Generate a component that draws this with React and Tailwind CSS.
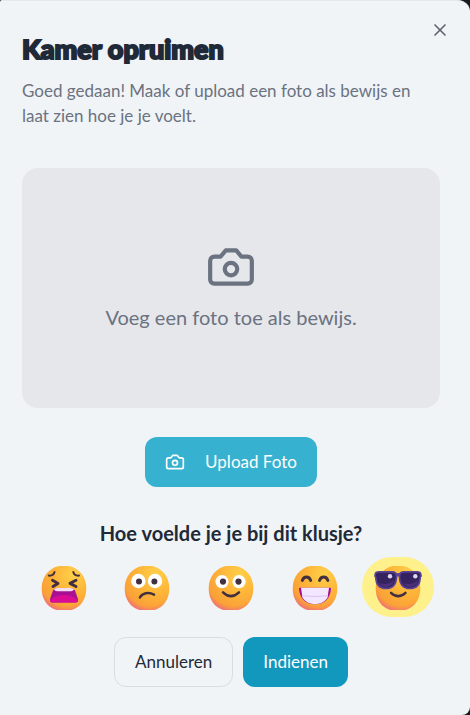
import { useId, useState } from 'react';
import { X } from 'lucide-react';

function CameraIcon({ className }) {
  return (
    <svg
      viewBox="0 0 24 24"
      className={className}
      fill="none"
      stroke="currentColor"
      strokeWidth="2"
      strokeLinecap="round"
      strokeLinejoin="round"
      aria-hidden="true"
    >
      <path d="M14.500 4h-5L7 7H4a2 2 0 0 0-2 2v9a2 2 0 0 0 2 2h16a2 2 0 0 0 2-2V9a2 2 0 0 0-2-2h-3l-2.500-3z" />
      <circle cx="12" cy="13" r="3" />
    </svg>
  );
}

const headShape =
  'M36 8.500C48.700 8.500 58.300 18 58.300 31.200C58.300 45 49.500 54 36 54C22.500 54 13.700 45 13.700 31.200C13.700 18 23.300 8.500 36 8.500Z';

function Face({ children }) {
  const id = useId();
  return (
    <svg viewBox="0 0 72 60" className="h-[60px] w-[72px]" aria-hidden="true">
      <defs>
        <radialGradient id={id + 'a'} cx="0.7" cy="0.2" r="0.95">
          <stop offset="0" stopColor="#ffd04a" />
          <stop offset="0.45" stopColor="#feb438" />
          <stop offset="0.8" stopColor="#fa9f38" />
          <stop offset="1" stopColor="#ec8048" />
        </radialGradient>
        <radialGradient id={id + 'b'} cx="0.56" cy="0.3" r="0.78">
          <stop offset="0.76" stopColor="#f0609a" stopOpacity="0" />
          <stop offset="1" stopColor="#ee5fa8" stopOpacity="0.9" />
        </radialGradient>
        <clipPath id={id + 'c'}>
          <rect x="12" y="9" width="48" height="44" />
        </clipPath>
      </defs>
      <g clipPath={`url(#${id}c)`}>
        <path d={headShape} fill={`url(#${id}a)`} />
        <path d={headShape} fill={`url(#${id}b)`} />
      </g>
      {children}
    </svg>
  );
}

function Angry() {
  return (
    <Face>
      <g fill="none" stroke="#43303f" strokeLinecap="round" strokeLinejoin="round">
        <path d="M20.800 18.600Q25.500 19 26.500 15M45.300 15Q46.300 19 51 18.600" strokeWidth="2" />
        <path d="M24.500 23.300L30 26.400L25 29.500M48 23.300L42 26.400L48 29.500" strokeWidth="2.900" />
      </g>
      <path d="M29 31H43Q45.500 31 47 33.500L49.800 41.500Q50.700 45.500 47.500 45.500H24.500Q21.300 45.500 22.200 41.500L25 33.500Q26.500 31 29 31Z" fill="#a80f93" />
      <path d="M24.500 45.500Q22 45.500 22 43Q28 38 36 38Q44 38 50 43Q50 45.500 47.500 45.500Z" fill="#d90c96" />
      <path d="M29 31H43Q45 31 46 32.500Q45 34.300 43 34.300H29Q27 34.300 26 32.500Q27 31 29 31Z" fill="#f0def5" />
    </Face>
  );
}

function Sad() {
  return (
    <Face>
      <circle cx="27.400" cy="24" r="7.200" fill="#fff" />
      <circle cx="44" cy="24" r="7.200" fill="#fff" />
      <circle cx="28" cy="24.600" r="3" fill="#43303f" />
      <circle cx="43.400" cy="24.600" r="3" fill="#43303f" />
      <path d="M28.900 40.500C31.500 35.800 37.500 34.800 43 37.600" fill="none" stroke="#43303f" strokeWidth="2.500" strokeLinecap="round" />
    </Face>
  );
}

function Happy() {
  return (
    <Face>
      <circle cx="27" cy="24.600" r="6.600" fill="#fff" />
      <circle cx="44" cy="24.600" r="6.600" fill="#fff" />
      <circle cx="28" cy="24.600" r="3.100" fill="#43303f" />
      <circle cx="43.500" cy="24.600" r="3.100" fill="#43303f" />
      <path d="M28 35.300Q35.900 43 44 35.300" fill="none" stroke="#43303f" strokeWidth="2.500" strokeLinecap="round" />
    </Face>
  );
}

function Grin() {
  return (
    <Face>
      <path d="M23.300 23.500Q24.500 20 27.500 20Q30.500 20 31.700 23.500M40.500 23.500Q41.700 20 44.700 20Q47.700 20 48.900 23.500" fill="none" stroke="#43303f" strokeWidth="2.900" strokeLinecap="round" />
      <path d="M20.800 30.700H51.200Q52.200 30.700 52 32C51 42 45.500 47.200 36 47.200C26.500 47.200 21 42 20 32Q19.800 30.700 20.800 30.700Z" fill="#a30b91" />
      <path d="M22 30.700H50L48.500 41Q43.500 47.200 36 47.200Q28.500 47.200 23.500 41Z" fill="#f3e6ff" />
      <path d="M22.800 38.800Q36 40.300 49.200 38.800" fill="none" stroke="#dcc4f2" strokeWidth="1" />
    </Face>
  );
}

function Cool() {
  return (
    <Face>
      <path d="M29 35.800Q36.200 42.500 43.500 35.800" fill="none" stroke="#43303f" strokeWidth="2.500" strokeLinecap="round" />
      <path d="M32 16.500Q36 15.500 40 16.500V20.500Q36 18.500 32 20.500Z" fill="#5f459a" />
      <path d="M13.300 17Q13.500 14.800 17 14.800H30Q34.500 14.800 34.500 19C34.500 27 31 31.500 24 31.500C17 31.500 14 27 13.800 20.500Q12.500 18.500 13.300 17Z" fill="#35235f" stroke="#5a4294" strokeWidth="1.700" />
      <path d="M58.700 17Q58.500 14.800 55 14.800H42Q37.500 14.800 37.500 19C37.500 27 41 31.500 48 31.500C55 31.500 58 27 58.200 20.500Q59.500 18.500 58.700 17Z" fill="#35235f" stroke="#5a4294" strokeWidth="1.700" />
      <path d="M17 26Q20 31 25 30Q31 29 32 23Q26 29 17 26ZM41 26Q44 31 49 30Q55 29 56 23Q50 29 41 26Z" fill="#4b2f78" />
      <circle cx="28" cy="19.300" r="2.200" fill="#dcd5ef" />
      <circle cx="53.300" cy="19.300" r="2.200" fill="#dcd5ef" />
    </Face>
  );
}

const moods = [
  { name: 'Vreselijk', Icon: Angry },
  { name: 'Niet leuk', Icon: Sad },
  { name: 'Prima', Icon: Happy },
  { name: 'Leuk', Icon: Grin },
  { name: 'Geweldig', Icon: Cool },
];

export default function App() {
  const [mood, setMood] = useState(4);
  return (
    <div className="min-h-screen bg-[#16191d] font-['Lato','Noto_Sans',sans-serif]">
      <main
        role="dialog"
        aria-labelledby="title"
        className="relative flex min-h-screen flex-col rounded-tl-xs rounded-tr-xl rounded-br-lg border-t border-[#e5e9ed] bg-[#f0f4f7] pt-[30px] pr-[30px] pb-[27px] pl-[22px] text-[#1f2937]"
      >
        <button type="button" aria-label="Sluiten" className="absolute top-[19px] right-5 text-[#5f6670]">
          <X size={20} strokeWidth={2} />
        </button>
        <h1 id="title" className="text-[27px] leading-9 font-black [-webkit-text-stroke:2px_#1f2937]">
          Kamer opruimen
        </h1>
        <p className="mt-[11px] text-[17px] leading-[25px] text-[#6b7280]">
          Goed gedaan! Maak of upload een foto als bewijs en laat zien hoe je je voelt.
        </p>

        <section className="mt-10 flex h-60 flex-col items-center justify-center gap-[11px] rounded-2xl bg-[#e5e7eb] pb-[3px] text-[#6b7280]">
          <CameraIcon className="size-[50px]" />
          <p className="text-xl leading-7">Voeg een foto toe als bewijs.</p>
        </section>

        <button
          type="button"
          className="mt-[29px] flex h-[50px] items-center gap-5 self-center rounded-xl bg-[#36b1cf] px-5 text-[17px] text-white"
        >
          <CameraIcon className="size-5" />
          Upload Foto
        </button>

        <h2 className="mt-8 text-center text-xl leading-7 font-bold">Hoe voelde je je bij dit klusje?</h2>
        <div className="mt-[10px] grid grid-cols-5 justify-items-center">
          {moods.map(({ name, Icon }, i) => (
            <button
              key={name}
              type="button"
              aria-label={name}
              aria-pressed={mood === i}
              onClick={() => setMood(i)}
              className={mood === i ? 'rounded-full bg-[#fef08a]' : 'rounded-full'}
            >
              <Icon />
            </button>
          ))}
        </div>

        <div className="mt-5 flex justify-center gap-[10px] text-[17px]">
          <button type="button" className="h-[50px] rounded-xl border border-[#d9dde2] px-5">
            Annuleren
          </button>
          <button type="button" className="h-[50px] rounded-xl bg-[#1297bd] px-5 text-white">
            Indienen
          </button>
        </div>
      </main>
    </div>
  );
}
